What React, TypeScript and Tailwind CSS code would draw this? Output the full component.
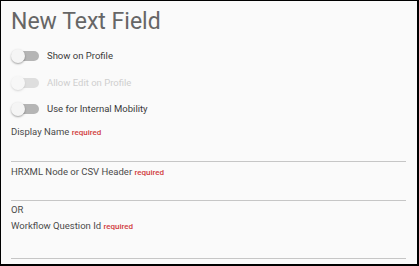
import React from 'react';

interface ToggleRowProps {
  label: string;
  disabled?: boolean;
}

const ToggleRow: React.FC<ToggleRowProps> = ({ label, disabled }) => (
  <div className="flex h-[26.5px] items-center">
    <div className={`relative h-[14px] w-[28px] shrink-0 ${disabled ? 'opacity-40' : ''}`}>
      <div className="absolute left-[5px] top-[2px] h-[10px] w-[23px] rounded-full bg-[#b5b5b5]" />
      <div className="absolute left-0 top-0 h-[14px] w-[14px] rounded-full bg-[#f5f5f5] shadow-[0_1px_2px_rgba(0,0,0,0.35)]" />
    </div>
    <span className={`ml-[8px] text-[9.5px] leading-[14px] ${disabled ? 'text-[#cfcfcf]' : 'text-[#3a3a3a]'}`}>{label}</span>
  </div>
);

interface FieldProps {
  label: string;
  height: string;
}

const Field: React.FC<FieldProps> = ({ label, height }) => (
  <div className={`flex flex-col border-b border-[#c6c6c6] ${height}`}>
    <div className="text-[9.5px] leading-[14px] text-[#4a4a4a]">
      {label} <span className="text-[8px] font-medium text-[#d13c3c]">required</span>
    </div>
  </div>
);

const App: React.FC = () => {
  return (
    <div
      className="h-[266px] w-[419px] overflow-hidden border-l border-t border-r-2 border-b-2 border-black bg-[#fafafa] pl-[10px] pr-[11px] pt-[5px]"
      style={{ fontFamily: 'Roboto, "Liberation Sans", sans-serif' }}
    >
      <h1 className="text-[23px] leading-[32px] text-[#666666]">New Text Field</h1>
      <div className="mt-[5px] flex flex-col">
        <ToggleRow label="Show on Profile" />
        <ToggleRow label="Allow Edit on Profile" disabled />
        <ToggleRow label="Use for Internal Mobility" />
      </div>
      <div className="mt-[2px]">
        <Field label="Display Name" height="h-[37px]" />
      </div>
      <div className="mt-[3px]">
        <Field label="HRXML Node or CSV Header" height="h-[36.5px]" />
      </div>
      <div className="mt-[2px] text-[9.5px] leading-[14px] text-[#4a4a4a]">OR</div>
      <div className="mt-[2px]">
        <Field label="Workflow Question Id" height="h-[39.5px]" />
      </div>
    </div>
  );
};

export default App;
